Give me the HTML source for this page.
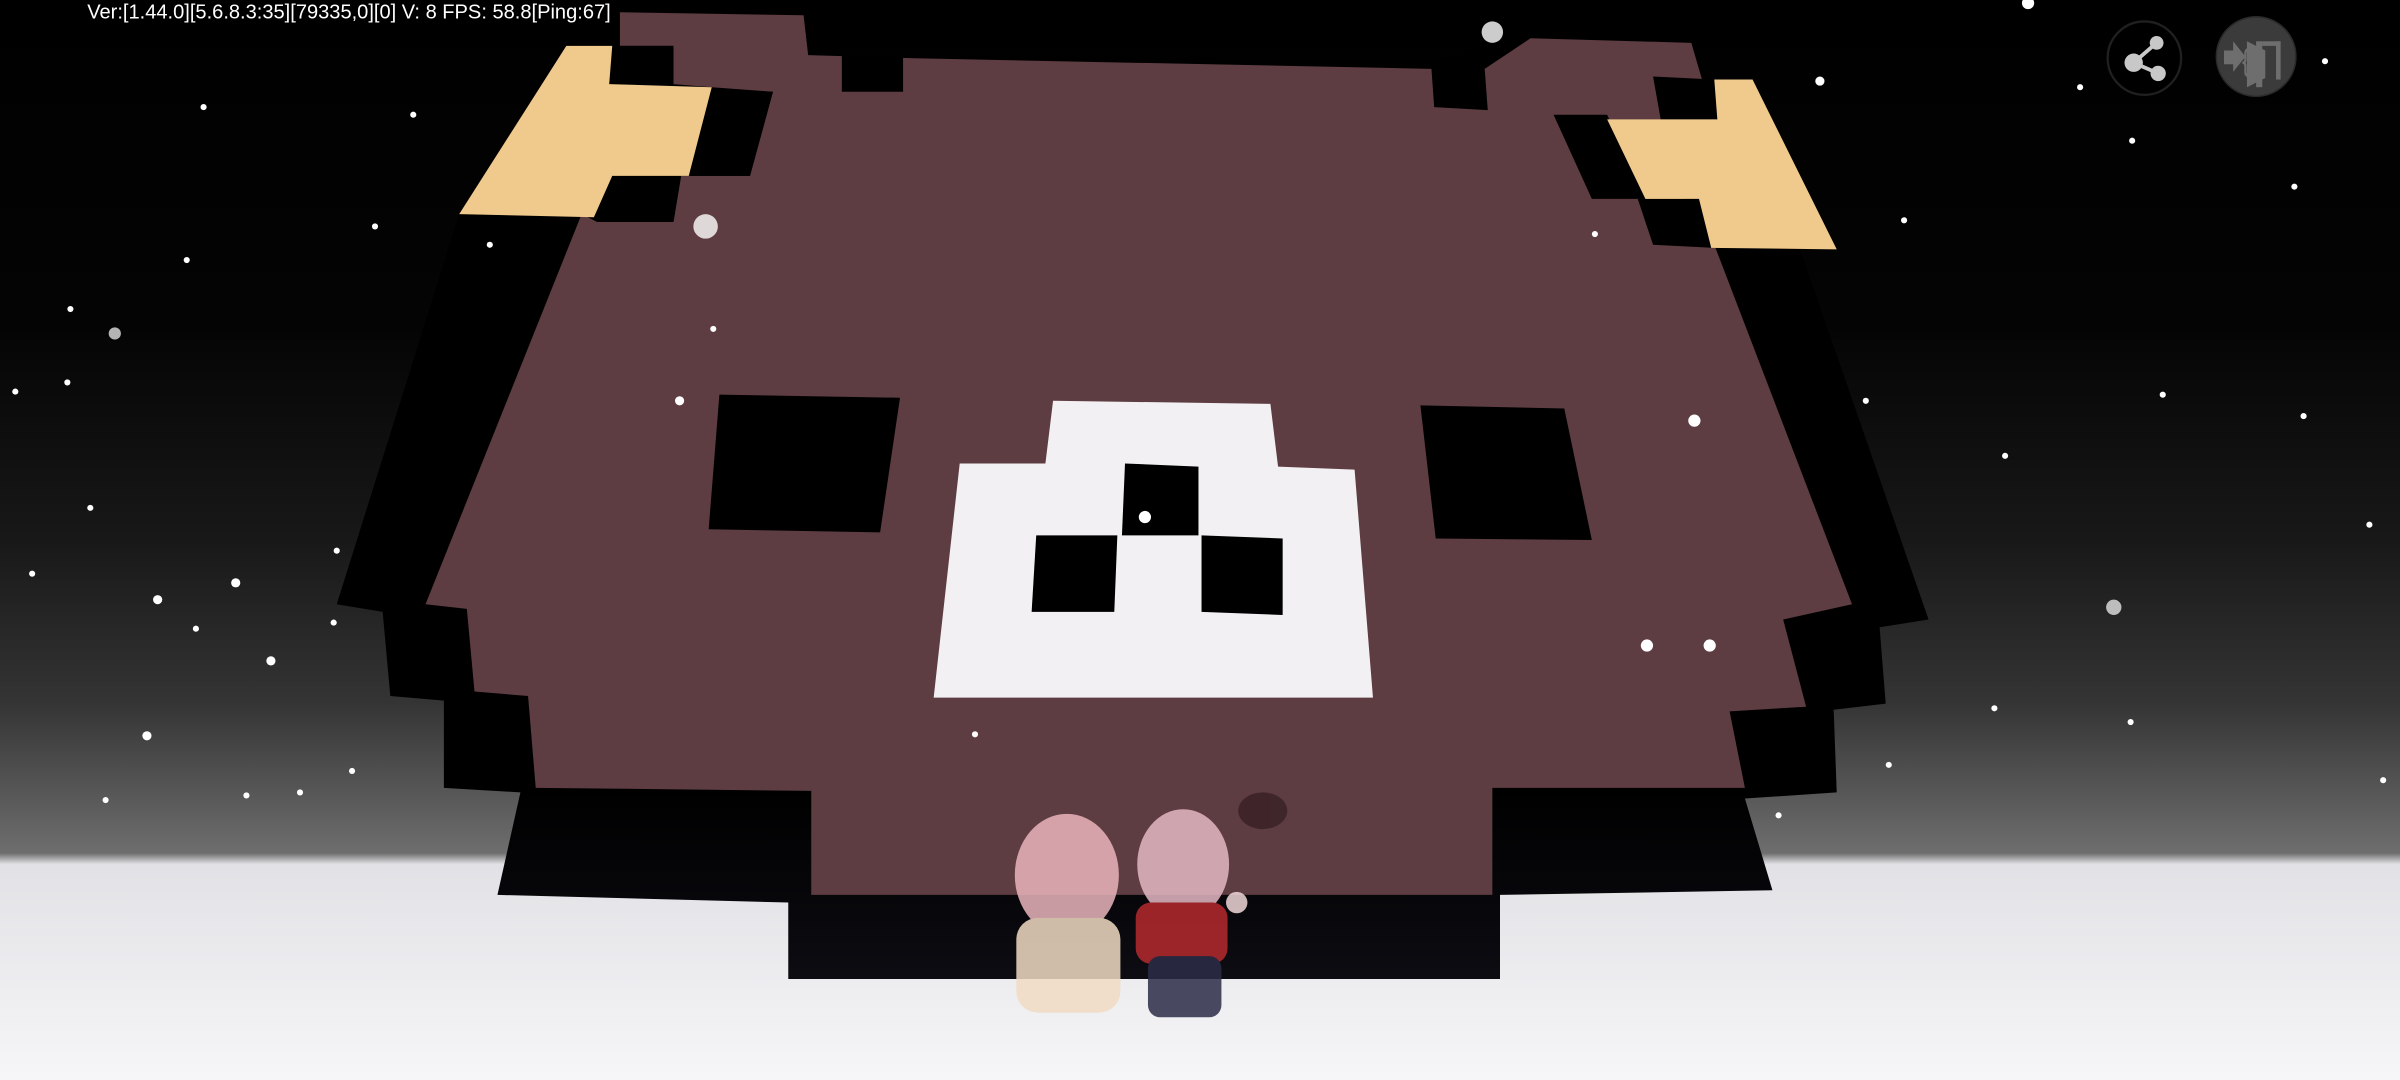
<!DOCTYPE html>
<html><head><meta charset="utf-8"><style>html,body{margin:0;padding:0;background:#000;overflow:hidden}svg{display:block}</style></head><body>
<svg width="2400" height="1080" viewBox="0 0 1568 706" preserveAspectRatio="none" xmlns="http://www.w3.org/2000/svg">
<defs>
<linearGradient id="sky" x1="0" y1="0" x2="0" y2="1">
<stop offset="0" stop-color="#000"/><stop offset="0.3" stop-color="#040404"/><stop offset="0.5" stop-color="#181818"/><stop offset="0.65" stop-color="#343434"/><stop offset="0.79" stop-color="#6e6e6e"/><stop offset="0.8" stop-color="#e0e0e4"/><stop offset="1" stop-color="#f4f4f6"/>
</linearGradient>
<linearGradient id="snow" x1="0" y1="0" x2="0" y2="1"><stop offset="0" stop-color="#e2e2e6"/><stop offset="1" stop-color="#f6f6f8"/></linearGradient>
<linearGradient id="sh" x1="0" y1="0" x2="0" y2="1"><stop offset="0.8" stop-color="#000"/><stop offset="1" stop-color="#0c0c12"/></linearGradient>
</defs>
<rect width="1568" height="706" fill="url(#sky)"/>
<rect y="565" width="1568" height="141" fill="url(#snow)"/>
<polygon fill="url(#sh)" points="300,140 380,60 405,8 525,10 550,35 590,36 935,40 1000,25 1105,28 1120,60 1175,160 1260,405 1228,410 1232,460 1198,464 1200,518 1140,522 1158,582 980,585 980,640 515,640 515,590 325,585 340,518 290,515 290,458 255,455 250,400 220,395"/>
<polygon fill="#5d3c42" points="405,8 525,10 528,36 594,38 935,45 970,45 1000,25 1105,28 1112,52 1120,78 1085,78 1100,130 1120,160 1210,395 1165,405 1180,462 1130,465 1140,515 975,515 975,585 530,585 530,517 350,515 345,455 310,452 305,398 278,395 380,140 390,145 440,145 445,115 490,115 505,60 465,57 440,55 440,30 405,30"/>
<polygon fill="#000" points="550,35 590,36 590,60 550,60"/>
<polygon fill="#000" points="935,42 970,45 972,72 937,70"/>
<polygon fill="#000" points="390,30 440,30 440,55 390,55"/>
<polygon fill="#000" points="465,58 505,60 490,115 450,115"/>
<polygon fill="#000" points="395,115 445,115 440,145 390,145"/>
<polygon fill="#000" points="1080,50 1120,52 1122,78 1085,78"/>
<polygon fill="#000" points="1015,75 1050,75 1075,130 1040,130"/>
<polygon fill="#000" points="1070,130 1110,130 1120,162 1080,160"/>
<polygon fill="#f0c98c" points="370,30 400,30 398,55 465,57 450,115 400,115 388,142 300,140"/>
<polygon fill="#f0c98c" points="1120,52 1145,52 1200,163 1118,162 1110,130 1075,130 1050,78 1122,78"/>
<polygon fill="#000" points="470,258 588,260 575,348 463,346"/>
<polygon fill="#000" points="928,265 1022,267 1040,353 938,352"/>
<polygon fill="#f2f0f2" points="688,262 830,264 835,305 885,307 897,456 610,456 627,303 683,303"/>
<polygon fill="#000" points="735,303 783,305 783,350 733,350"/>
<polygon fill="#000" points="677,350 730,350 728,400 674,400"/>
<polygon fill="#000" points="785,350 838,352 838,402 785,400"/>
<g opacity="0.85">
<ellipse cx="697" cy="572" rx="34" ry="40" fill="#eab4bc"/>
<rect x="664" y="600" width="68" height="62" rx="14" fill="#f2dcc4"/>
<ellipse cx="773" cy="565" rx="30" ry="36" fill="#e4b8c4"/>
<rect x="742" y="590" width="60" height="40" rx="10" fill="#b52a2e"/>
<rect x="750" y="625" width="48" height="40" rx="8" fill="#2c2c48"/>
<circle cx="808" cy="590" r="7" fill="#f0d8d8"/>
<ellipse cx="825" cy="530" rx="16" ry="12" fill="#3a2226"/>
</g>
<g fill="#fff">
<circle cx="975" cy="21" r="7" opacity="0.8"/><circle cx="461" cy="148" r="8" opacity="0.8"/><circle cx="1189" cy="53" r="3"/><circle cx="1107" cy="275" r="4"/><circle cx="1076" cy="422" r="4"/><circle cx="1117" cy="422" r="4"/><circle cx="1381" cy="397" r="5" opacity="0.7"/><circle cx="1325" cy="2" r="4"/><circle cx="1519" cy="40" r="2"/><circle cx="444" cy="262" r="3"/><circle cx="466" cy="215" r="2"/><circle cx="748" cy="338" r="4"/><circle cx="637" cy="480" r="2"/><circle cx="75" cy="218" r="4" opacity="0.7"/><circle cx="133" cy="70" r="2"/><circle cx="122" cy="170" r="2"/><circle cx="46" cy="202" r="2"/><circle cx="103" cy="392" r="3"/><circle cx="154" cy="381" r="3"/><circle cx="96" cy="481" r="3"/><circle cx="177" cy="432" r="3"/><circle cx="218" cy="407" r="2"/><circle cx="196" cy="518" r="2"/><circle cx="10" cy="256" r="2"/><circle cx="44" cy="250" r="2"/><circle cx="245" cy="148" r="2"/><circle cx="270" cy="75" r="2"/><circle cx="1359" cy="57" r="2"/><circle cx="1393" cy="92" r="2"/><circle cx="1548" cy="343" r="2"/><circle cx="1557" cy="510" r="2"/><circle cx="1392" cy="472" r="2"/><circle cx="1234" cy="500" r="2"/><circle cx="1303" cy="463" r="2"/><circle cx="1413" cy="258" r="2"/><circle cx="1499" cy="122" r="2"/><circle cx="1310" cy="298" r="2"/><circle cx="1219" cy="262" r="2"/><circle cx="128" cy="411" r="2"/><circle cx="21" cy="375" r="2"/><circle cx="69" cy="523" r="2"/><circle cx="161" cy="520" r="2"/><circle cx="230" cy="504" r="2"/><circle cx="1244" cy="144" r="2"/><circle cx="1042" cy="153" r="2"/><circle cx="1162" cy="533" r="2"/><circle cx="320" cy="160" r="2"/><circle cx="59" cy="332" r="2"/><circle cx="220" cy="360" r="2"/><circle cx="1505" cy="272" r="2"/>
</g>
<text x="57" y="12" font-family="Liberation Sans Narrow, Liberation Sans, sans-serif" font-size="13" fill="#fff" textLength="342" lengthAdjust="spacingAndGlyphs">Ver:[1.44.0][5.6.8.3:35][79335,0][0] V: 8 FPS: 58.8[Ping:67]</text>
<circle cx="1401" cy="38" r="24" fill="#000" stroke="#202020" stroke-width="1.5"/>
<g stroke="#c8c8c8" stroke-width="2.5"><line x1="1394" y1="41" x2="1409" y2="28"/><line x1="1394" y1="41" x2="1410" y2="48"/></g>
<g fill="#c8c8c8"><circle cx="1394" cy="41" r="6"/><circle cx="1409" cy="28" r="4.5"/><circle cx="1410" cy="48" r="5"/></g>
<circle cx="1474" cy="37" r="26" fill="#3b3b3b" stroke="#2a2a2a" stroke-width="1"/>
<polygon fill="#6e6e6e" points="1468,27 1480,33 1480,51 1468,57"/>
<rect x="1474" y="27" width="4" height="30" fill="#6e6e6e"/>
<rect x="1478" y="27" width="12" height="3" fill="#6e6e6e"/>
<rect x="1487" y="27" width="3" height="25" fill="#6e6e6e"/>
<path d="M1470 32 q-3 0 -3 3 v4 q0 2 -2 2 q2 0 2 2 v4 q0 3 3 3" fill="none" stroke="#6e6e6e" stroke-width="1.5"/>
<polygon fill="#6e6e6e" points="1453,33 1459,33 1459,27 1467,37 1459,47 1459,42 1453,42"/>
</svg>
</body></html>
